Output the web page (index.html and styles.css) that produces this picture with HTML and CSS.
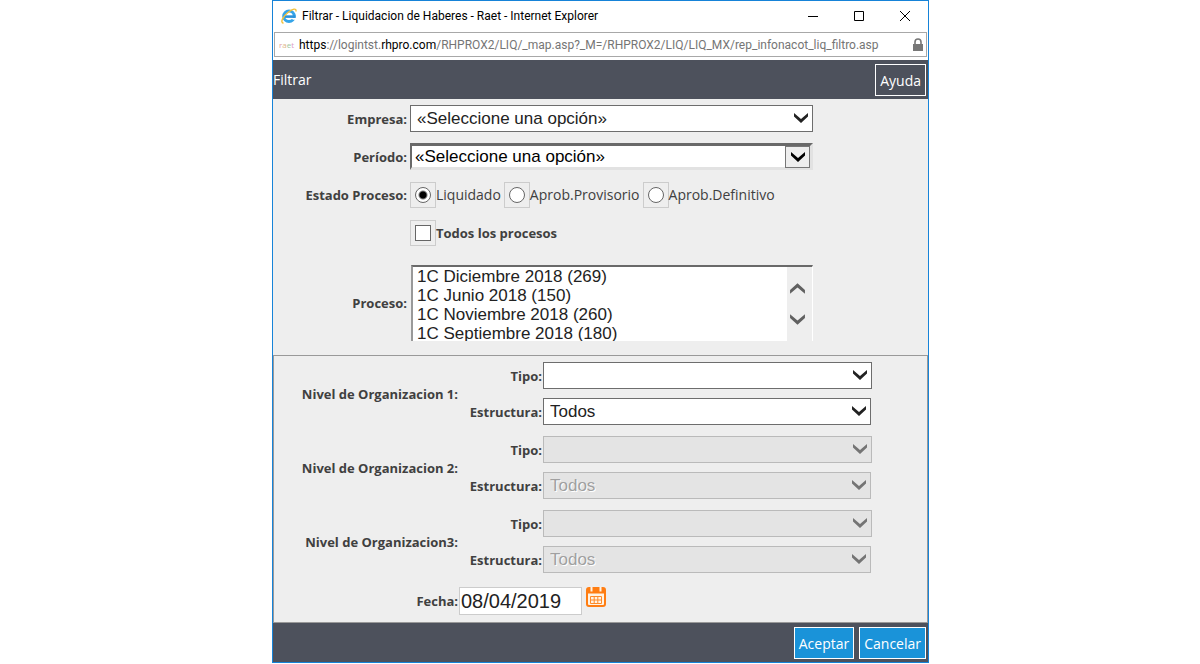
FILE: index.html
```html
<!DOCTYPE html>
<html lang="es">
<head>
<meta charset="utf-8">
<title>Filtrar - Liquidacion de Haberes - Raet</title>
<link rel="stylesheet" href="styles.css">
</head>
<body>
<svg class="symbols" aria-hidden="true">
  <symbol id="chevron" viewBox="0 0 16 10"><path d="M1 0v3.500L8 10l7-6.500V0L8 6z" fill="currentColor"/></symbol>
</svg>
<div class="window">
  <header class="titlebar">
    <svg class="ie-icon" viewBox="0 0 16 16" aria-hidden="true">
      <circle cx="8" cy="8.300" r="5.300" fill="none" stroke="#35a4e8" stroke-width="3"/>
      <path d="M4 8.600h10.500" stroke="#2c92da" stroke-width="2.600"/>
      <path d="M10 10h6v1.800h-4z" fill="#fff"/>
      <path d="M2.500 15.200C-1.500 14.500 2.500 8 7 4.500S15.500-.5 15 3.500" fill="none" stroke="#f2c03a" stroke-width="1.400"/>
    </svg>
    <span class="window-title">Filtrar - Liquidacion de Haberes - Raet - Internet Explorer</span>
    <button class="window-button" type="button" aria-label="Minimizar"><svg viewBox="0 0 12 12"><path d="M1 6.500h10"/></svg></button>
    <button class="window-button" type="button" aria-label="Maximizar"><svg viewBox="0 0 12 12"><path d="M1.500 1.500h9v9h-9z"/></svg></button>
    <button class="window-button" type="button" aria-label="Cerrar"><svg viewBox="0 0 12 12"><path d="M1 1l10 10M11 1L1 11"/></svg></button>
  </header>

  <div class="address">
    <span class="favicon"><i>r</i><b>a</b><em>e</em><u>t</u></span>
    <span class="url"><strong>https</strong>://logintst.<strong>rhpro.com</strong>/RHPROX2/LIQ/_map.asp?_M=/RHPROX2/LIQ/LIQ_MX/rep_infonacot_liq_filtro.asp</span>
    <svg class="lock" viewBox="0 0 12 14" aria-hidden="true"><path d="M3 7V4a3 3 0 0 1 6 0v3" fill="none" stroke="#777" stroke-width="1.600"/><rect x="1" y="6" width="10" height="7" fill="#777"/></svg>
  </div>

  <div class="toolbar">
    <span class="toolbar-title">Filtrar</span>
    <button class="help" type="button">Ayuda</button>
  </div>

  <form class="filters">
    <div class="main-fields">
      <label class="label" for="empresa">Empresa:</label>
      <div class="combo wide">
        <select id="empresa"><option>«Seleccione una opción»</option></select>
        <svg class="arrow"><use href="#chevron"/></svg>
      </div>
      <label class="label" for="periodo">Período:</label>
      <div class="combo wide sunken">
        <select id="periodo"><option>«Seleccione una opción»</option></select>
        <span class="arrow-box"><svg><use href="#chevron"/></svg></span>
      </div>
      <span class="label" id="estado">Estado Proceso:</span>
      <div class="choices" role="radiogroup" aria-labelledby="estado">
        <label class="choice"><input type="radio" name="estado" checked>Liquidado</label>
        <label class="choice"><input type="radio" name="estado">Aprob.Provisorio</label>
        <label class="choice"><input type="radio" name="estado">Aprob.Definitivo</label>
      </div>
      <label class="choice all"><input type="checkbox">Todos los procesos</label>
      <label class="label" for="proceso">Proceso:</label>
      <div class="list">
        <select id="proceso" size="4">
          <option>1C Diciembre 2018 (269)</option>
          <option>1C Junio 2018 (150)</option>
          <option>1C Noviembre 2018 (260)</option>
          <option>1C Septiembre 2018 (180)</option>
        </select>
        <div class="scroller">
          <svg class="up"><use href="#chevron"/></svg>
          <svg><use href="#chevron"/></svg>
        </div>
      </div>
    </div>

    <div class="organization">
      <div class="level" role="group" aria-labelledby="nivel1">
        <span class="label" id="nivel1">Nivel de Organizacion 1:</span>
        <div class="level-fields">
          <label class="label" for="tipo1">Tipo:</label>
          <div class="combo type"><select id="tipo1"><option></option></select><svg class="arrow"><use href="#chevron"/></svg></div>
          <label class="label" for="estructura1">Estructura:</label>
          <div class="combo structure"><select id="estructura1"><option>Todos</option></select><svg class="arrow"><use href="#chevron"/></svg></div>
        </div>
      </div>
      <div class="level" role="group" aria-labelledby="nivel2">
        <span class="label" id="nivel2">Nivel de Organizacion 2:</span>
        <div class="level-fields">
          <label class="label" for="tipo2">Tipo:</label>
          <div class="combo type"><select id="tipo2" disabled><option></option></select><svg class="arrow"><use href="#chevron"/></svg></div>
          <label class="label" for="estructura2">Estructura:</label>
          <div class="combo structure"><select id="estructura2" disabled><option>Todos</option></select><svg class="arrow"><use href="#chevron"/></svg></div>
        </div>
      </div>
      <div class="level" role="group" aria-labelledby="nivel3">
        <span class="label" id="nivel3">Nivel de Organizacion3:</span>
        <div class="level-fields">
          <label class="label" for="tipo3">Tipo:</label>
          <div class="combo type"><select id="tipo3" disabled><option></option></select><svg class="arrow"><use href="#chevron"/></svg></div>
          <label class="label" for="estructura3">Estructura:</label>
          <div class="combo structure"><select id="estructura3" disabled><option>Todos</option></select><svg class="arrow"><use href="#chevron"/></svg></div>
        </div>
      </div>
      <div class="level date-row">
        <label class="label" for="fecha">Fecha:</label>
        <div class="date">
          <input id="fecha" type="text" value="08/04/2019">
          <button class="calendar" type="button" aria-label="Calendario">
            <svg viewBox="0 0 20 20">
              <rect x="1" y="1" width="18" height="18" rx="2" fill="#fff3e4" stroke="#ff7d12" stroke-width="2"/>
              <path d="M2 2h16v4.500H2z" fill="#ff7d12"/>
              <path d="M5.500 0v4.500M14.500 0v4.500" stroke="#fff3e4" stroke-width="2"/>
              <path d="M4.500 9.500h11v7h-11zM4.500 13h11M8.200 9.500v7M11.800 9.500v7" fill="none" stroke="#ff8a28"/>
            </svg>
          </button>
        </div>
      </div>
    </div>

    <footer class="actions">
      <button type="submit">Aceptar</button>
      <button type="button">Cancelar</button>
    </footer>
  </form>
</div>
</body>
</html>
```
FILE: styles.css
```css
* { box-sizing: border-box; }

body {
  margin: 0;
  padding-left: 1px;
  background: #fff;
  color: #404040;
  font: 14px/20px "Open Sans", "Noto Sans", sans-serif;
}

button, input, select { font: inherit; color: inherit; margin: 0; border-radius: 0; }
svg { display: block; }
.symbols { display: none; }

.window {
  max-width: 657px;
  margin: 0 auto;
  border: 1px solid #1683d8;
  background: #fff;
}

.titlebar {
  display: flex;
  align-items: center;
  height: 30px;
  padding-left: 8px;
  color: #000;
}
.ie-icon { width: 16px; height: 16px; margin-right: 5px; }
.window-title { flex: 1; font-family: Roboto, sans-serif; font-size: 12px; }
.window-button {
  display: grid;
  place-items: center;
  width: 46px;
  height: 28px;
  padding: 0;
  border: 0;
  background: none;
}
.window-button svg { width: 12px; height: 12px; fill: none; stroke: #000; }

.address {
  display: flex;
  align-items: center;
  height: 25px;
  margin: 1px 1px 3px;
  padding: 0 2px 0 4px;
  border: 1px solid #a8a8a8;
  font-size: 12px;
  color: #757575;
}
.favicon { width: 20px; font-size: 8px; }
.favicon * { font-style: normal; font-weight: 400; text-decoration: none; }
.favicon i { color: #e3a0a0; }
.favicon b { color: #e0b78a; }
.favicon em { color: #9cc79c; }
.favicon u { color: #dd9cc5; }
.url { flex: 1; font-family: Roboto, sans-serif; white-space: nowrap; }
.url strong { color: #000; font-weight: 400; }
.lock { width: 12px; height: 14px; }

.toolbar {
  display: flex;
  align-items: center;
  justify-content: space-between;
  height: 39px;
  padding-right: 2px;
  background: #4d515c;
  color: #fff;
}
.help, .actions button {
  height: 32px;
  padding: 2px 4px 0;
  border: 1px solid #fff;
  color: #fff;
  font-size: 14px;
}
.help { background: #4d515c; }

.filters { background: #eee; }
.label { justify-self: end; font-size: 13px; font-weight: 700; white-space: nowrap; }

.main-fields {
  display: grid;
  grid-template-columns: 134px 1fr;
  grid-template-rows: 27px 27px 28px 26px 92px;
  gap: 11px 3px;
  align-items: center;
  padding: 6px 0;
}

.combo { display: grid; height: 27px; max-width: 100%; }
.combo.wide { width: 403px; }
.combo.type { width: 329px; }
.combo.structure { width: 328px; }
.combo select {
  grid-area: 1 / 1;
  width: 100%;
  appearance: none;
  padding: 1px 26px 0 6px;
  border: 1px solid #6d6d6d;
  background: #fff;
  color: #222;
  font: 17px/24px "Liberation Sans", sans-serif;
}
.arrow {
  grid-area: 1 / 1;
  justify-self: end;
  width: 16px;
  height: 10px;
  margin: 8px 4px 0 0;
  color: #222;
  pointer-events: none;
}
.combo select:disabled {
  border-color: #bababa;
  background: #e4e4e4;
  color: #a0a0a0;
  opacity: 1;
  text-shadow: 1px 1px #fff;
}
.combo select:disabled + .arrow { color: #747474; }
.combo.sunken select {
  padding: 1px 28px 0 3px;
  border: 3px solid #e2e2e2;
  border-top-color: #696969;
  border-left: 2px solid #696969;
  color: #000;
  line-height: 20px;
}
.arrow-box {
  grid-area: 1 / 1;
  justify-self: end;
  align-self: center;
  display: grid;
  place-items: center;
  width: 25px;
  height: 22px;
  margin: 1px 3px 0 0;
  border: 1px solid #777;
  background: #eee;
  color: #000;
  pointer-events: none;
}
.arrow-box svg { width: 16px; height: 10px; }

.choices { display: flex; gap: 3px; }
.choice { display: flex; align-items: center; white-space: nowrap; }
.choice input {
  display: grid;
  place-items: center;
  appearance: none;
  width: 26px;
  height: 26px;
  border: 1px solid #ccc;
}
.choice input::before {
  content: "";
  width: 14px;
  height: 14px;
  border: 1px solid #666;
  background: #fff;
}
.choice input[type="radio"]::before { border-radius: 50%; }
.choice input:checked::before { background: radial-gradient(circle, #000 3px, #fff 5px); }
.all { grid-column: 2; font-size: 13px; font-weight: 700; }

.list {
  display: flex;
  width: 402px;
  height: 76px;
  max-width: 100%;
  margin-left: 1px;
  border-top: 2px solid #696969;
  border-left: 2px solid #999;
  border-right: 1px solid #fff;
  background: #fff;
}
.list select {
  flex: 1;
  height: 74px;
  padding: 0;
  border: 0;
  overflow: hidden;
  background: #fff;
  color: #222;
  font: 17px/19px "Liberation Sans", sans-serif;
}
.list option { height: 19px; min-height: 19px; padding: 0 4px; }
.scroller {
  display: flex;
  flex-direction: column;
  justify-content: center;
  gap: 20px;
  width: 25px;
  padding-left: 2px;
  background: #eee;
  color: #606060;
}
.scroller svg { width: 17px; height: 11px; }
.scroller .up { transform: rotate(180deg); }

.organization {
  display: grid;
  row-gap: 11px;
  padding: 6px 0 7px;
  border: 1px solid #999;
}
.level {
  display: grid;
  grid-template-columns: 184px 1fr;
  column-gap: 1px;
  align-items: center;
}
.level-fields {
  display: grid;
  grid-template-columns: 83px 1fr;
  gap: 9px 1px;
  align-items: center;
}
.date-row { padding-top: 3px; }
.date { display: flex; gap: 4px; }
.date input {
  width: 123px;
  height: 28px;
  padding: 0 1px;
  border: 1px solid #ccc;
  background: #fff;
  color: #222;
  font: 20px/24px "Liberation Sans", sans-serif;
}
.calendar { width: 20px; height: 20px; padding: 0; border: 0; background: none; }

.actions {
  display: flex;
  justify-content: flex-end;
  align-items: center;
  gap: 5px;
  height: 39px;
  padding-right: 2px;
  background: #4d515c;
}
.actions button { background: #1a93d9; }
```
